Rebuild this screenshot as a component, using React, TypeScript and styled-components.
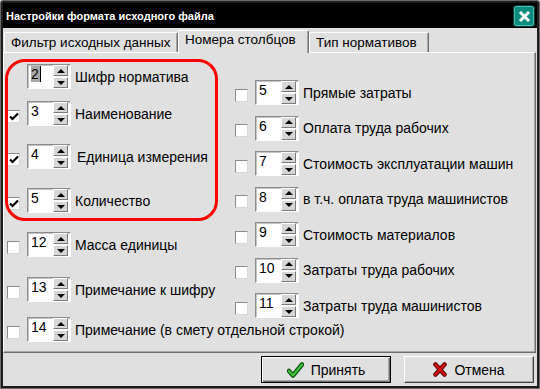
import React from 'react';
import styled, { createGlobalStyle, css } from 'styled-components';

const GlobalStyle = createGlobalStyle`
  html, body {
    margin: 0;
    padding: 0;
    background: #e0e0e0;
  }
  body {
    font-family: "Liberation Sans", Arial, sans-serif;
  }
  * {
    box-sizing: border-box;
  }
`;

// Window frame
const Window = styled.div`
  width: 540px;
  height: 389px;
  display: flex;
  flex-direction: column;
  background: #1e1e1e;
  border: 1px solid #6a6a6a;
  border-radius: 3px 3px 0 0;
  padding: 2px;
`;

const TitleBar = styled.div`
  height: 25px;
  flex: none;
  display: flex;
  align-items: center;
  justify-content: space-between;
  padding-left: 3px;
  background: #000;
`;

const Title = styled.span`
  color: #fff;
  font-weight: bold;
  font-size: 11px;
  margin-top: 1px;
`;

const CloseButton = styled.div`
  width: 20px;
  height: 20px;
  margin: 1px 3px 0 0;
  border-radius: 2px;
  background: #0c8c7f;
  border: 1px solid #44bcae;
  box-shadow: 0 0 0 1px #0a3d38;
  display: flex;
  align-items: center;
  justify-content: center;
`;

const Body = styled.div`
  flex: 1;
  display: flex;
  flex-direction: column;
  background: #e0e0e0;
  padding-top: 2px;
`;

// Tabs
const TabStrip = styled.div`
  height: 22px;
  flex: none;
  display: flex;
  align-items: flex-end;
  padding-left: 1px;
`;

const Tab = styled.div<{ $active?: boolean; $w: number }>`
  width: ${({ $w }) => $w}px;
  height: 20px;
  padding: 1px 0 0 6px;
  font-size: 13.5px;
  line-height: 18px;
  color: #000;
  white-space: nowrap;
  background: #e0e0e0;
  border: 1px solid;
  border-bottom: none;
  border-color: #fff #6e6e6e transparent #fff;
  box-shadow: inset -1px 0 0 #a8a8a8;
  border-radius: 2px 2px 0 0;

  ${({ $active }) => $active && css`
    height: 23px;
    margin-bottom: -1px;
    padding-top: 0;
    position: relative;
    z-index: 1;
  `}
`;

// Panel
const Panel = styled.div`
  position: relative;
  height: 301px;
  flex: none;
  margin-right: 1px;
  border: 1px solid;
  border-color: #fff #6e6e6e #6e6e6e #fff;
  box-shadow: inset -1px -1px 0 #a8a8a8;
  padding: 11px 0 0 3px;
  display: grid;
  grid-template-columns: 228px 1fr;
  align-items: start;
`;

const Column = styled.div<{ $top?: number }>`
  display: flex;
  flex-direction: column;
  padding-top: ${({ $top }) => $top ?? 0}px;
`;

const Row = styled.div<{ $mt: number }>`
  height: 25px;
  display: flex;
  align-items: center;
  margin-top: ${({ $mt }) => $mt}px;
`;

const CheckSlot = styled.div`
  width: 13px;
  height: 13px;
  margin: 5px 7px 0 0;
  flex: none;
`;

const CheckBox = styled.div`
  width: 13px;
  height: 13px;
  background: #fff;
  border: 1px solid;
  border-color: #8c8c8c #d8d8d8 #d8d8d8 #8c8c8c;
  display: flex;
  align-items: center;
  justify-content: center;
`;

const Spin = styled.div`
  width: 44px;
  height: 25px;
  flex: none;
  display: flex;
  background: #fff;
  border: 1px solid;
  border-color: #8c8c8c #fff #fff #8c8c8c;
  box-shadow: inset 1px 1px 0 #c4c4c4;
`;

const SpinValue = styled.div`
  flex: 1;
  padding: 1px 0 0 3px;
  font-size: 14px;
  line-height: 16px;
  color: #000;
`;

const Selected = styled.span`
  background: #a8a8a8;
  border-right: 1px solid #000;
  padding-right: 1px;
`;

const SpinButtons = styled.div`
  width: 17px;
  display: flex;
  flex-direction: column;
  gap: 1px;
  padding: 0 2px 0 0;
`;

const SpinButton = styled.div`
  flex: 1;
  background: #d6d6d6;
  border: 1px solid;
  border-color: #fff #7a7a7a #7a7a7a #fff;
  display: flex;
  align-items: center;
  justify-content: center;
`;

const Arrow = styled.span<{ $down?: boolean }>`
  width: 0;
  height: 0;
  border-left: 4px solid transparent;
  border-right: 4px solid transparent;
  ${({ $down }) => $down
    ? css`border-top: 4px solid #000;`
    : css`border-bottom: 4px solid #000;`}
`;

const Label = styled.span<{ $indent?: number }>`
  margin-left: ${({ $indent }) => 4 + ($indent ?? 0)}px;
  font-size: 14px;
  color: #000;
  white-space: nowrap;
`;

// Red annotation drawn over the first rows
const Highlight = styled.div`
  position: absolute;
  left: 1px;
  top: 6px;
  width: 213px;
  height: 162px;
  border: 3px solid #ff0000;
  border-radius: 20px;
  pointer-events: none;
`;

// Footer
const Footer = styled.div`
  flex: 1;
  display: flex;
  justify-content: flex-end;
  align-items: flex-start;
  gap: 13px;
  padding: 3px 3px 0 0;
`;

const Button = styled.div<{ $default?: boolean }>`
  width: 130px;
  height: 27px;
  display: flex;
  align-items: center;
  justify-content: center;
  gap: 7px;
  font-size: 14px;
  color: #000;
  background: #e0e0e0;
  border: 1px solid;
  ${({ $default }) => $default
    ? css`
      border-color: #000;
      box-shadow: inset 1px 1px 0 #fff, inset -1px -1px 0 #6e6e6e, inset -2px -2px 0 #a8a8a8;
    `
    : css`
      border-color: #fff #404040 #404040 #fff;
      box-shadow: inset -1px -1px 0 #a8a8a8;
    `}
`;

type Item = {
  n: string;
  label: string;
  check?: boolean | null;
  mt: number;
  selected?: boolean;
  indent?: number;
};

const leftItems: Item[] = [
  { n: '2', label: 'Шифр норматива', check: null, mt: 0, selected: true },
  { n: '3', label: 'Наименование', check: true, mt: 12 },
  { n: '4', label: 'Единица измерения', check: true, mt: 18, indent: 2 },
  { n: '5', label: 'Количество', check: true, mt: 19 },
  { n: '12', label: 'Масса единицы', check: false, mt: 19 },
  { n: '13', label: 'Примечание к шифру', check: false, mt: 20 },
  { n: '14', label: 'Примечание (в смету отдельной строкой)', check: false, mt: 15 },
];

const rightItems: Item[] = [
  { n: '5', label: 'Прямые затраты', check: false, mt: 0 },
  { n: '6', label: 'Оплата труда рабочих', check: false, mt: 10.5 },
  { n: '7', label: 'Стоимость эксплуатации машин', check: false, mt: 10.5 },
  { n: '8', label: 'в т.ч. оплата труда машинистов', check: false, mt: 10.5 },
  { n: '9', label: 'Стоимость материалов', check: false, mt: 10.5 },
  { n: '10', label: 'Затраты труда рабочих', check: false, mt: 10.5 },
  { n: '11', label: 'Затраты труда машинистов', check: false, mt: 10.5 },
];

const Tick = () => (
  <svg width="10" height="9" viewBox="0 0 10 9">
    <path d="M1 4.5 L3.5 7 L9 1.5" fill="none" stroke="#000" strokeWidth="2.2" />
  </svg>
);

const FieldRow: React.FC<{ item: Item }> = ({ item }) => (
  <Row $mt={item.mt}>
    <CheckSlot>
      {item.check !== null && item.check !== undefined && (
        <CheckBox>{item.check && <Tick />}</CheckBox>
      )}
    </CheckSlot>
    <Spin>
      <SpinValue>
        {item.selected ? <Selected>{item.n}</Selected> : item.n}
      </SpinValue>
      <SpinButtons>
        <SpinButton><Arrow /></SpinButton>
        <SpinButton><Arrow $down /></SpinButton>
      </SpinButtons>
    </Spin>
    <Label $indent={item.indent}>{item.label}</Label>
  </Row>
);

const OkIcon = () => (
  <svg width="17" height="16" viewBox="0 0 17 16">
    <path d="M2 9 L6 13.5 L15 2.5" fill="none" stroke="#0b4f12" strokeWidth="4.5" strokeLinejoin="round" strokeLinecap="round" />
    <path d="M2 9 L6 13.5 L15 2.5" fill="none" stroke="#3fbf3a" strokeWidth="2.2" strokeLinejoin="round" strokeLinecap="round" />
  </svg>
);

const CancelIcon = () => (
  <svg width="14" height="15" viewBox="0 0 14 15">
    <path d="M2.5 2.5 L11.5 12.5 M11.5 2.5 L2.5 12.5" fill="none" stroke="#5a0000" strokeWidth="4.5" strokeLinecap="round" />
    <path d="M2.5 2.5 L11.5 12.5 M11.5 2.5 L2.5 12.5" fill="none" stroke="#d40d0d" strokeWidth="2.5" strokeLinecap="round" />
  </svg>
);

export default function App() {
  return (
    <>
      <GlobalStyle />
      <Window>
        <TitleBar>
          <Title>Настройки формата исходного файла</Title>
          <CloseButton>
            <svg width="13" height="13" viewBox="0 0 13 13">
              <path d="M2 2 L11 11 M11 2 L2 11" stroke="#fff" strokeWidth="3" />
            </svg>
          </CloseButton>
        </TitleBar>
        <Body>
          <TabStrip>
            <Tab $w={174}>Фильтр исходных данных</Tab>
            <Tab $active $w={131}>Номера столбцов</Tab>
            <Tab $w={120}>Тип нормативов</Tab>
          </TabStrip>
          <Panel>
            <Column>
              {leftItems.map((item) => (
                <FieldRow key={item.n + item.label} item={item} />
              ))}
            </Column>
            <Column $top={16}>
              {rightItems.map((item) => (
                <FieldRow key={item.n + item.label} item={item} />
              ))}
            </Column>
            <Highlight />
          </Panel>
          <Footer>
            <Button $default>
              <OkIcon />
              Принять
            </Button>
            <Button>
              <CancelIcon />
              Отмена
            </Button>
          </Footer>
        </Body>
      </Window>
    </>
  );
}
